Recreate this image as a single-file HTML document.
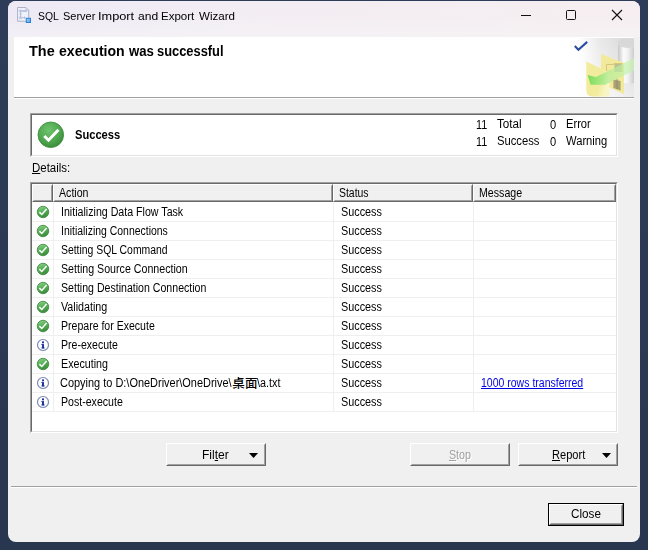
<!DOCTYPE html>
<html><head><meta charset="utf-8"><title>SQL Server Import and Export Wizard</title>
<style>
*{box-sizing:border-box;margin:0;padding:0}
html,body{width:648px;height:550px;overflow:hidden}
body{background:linear-gradient(180deg,#2d3c58 0%,#293650 100%);font-family:"Liberation Sans","Noto Sans CJK TC",sans-serif;font-size:12px;line-height:14px;color:#000;position:relative}
div,span.a,svg.a{position:absolute}
.t{display:block;white-space:nowrap;transform:scaleX(.885);transform-origin:0 0;position:absolute}
#win{left:8px;top:1px;width:632px;height:541px;background:#f0f0f0;border-radius:8px;overflow:hidden}
#tb{left:8px;top:1px;width:632px;height:36px;border-radius:8px 8px 0 0;background:linear-gradient(180deg,rgba(255,255,255,0) 0%,rgba(255,255,255,0) 40%,rgba(246,246,246,.55) 100%),linear-gradient(90deg,#ede9f5 0%,#f2edf4 30%,#f6eef0 100%)}
#title{left:38px;top:8px;font-size:11.67px;color:#1b1b1b;white-space:nowrap}
#hdr{left:14px;top:37px;width:620px;height:60px;background:#fff}
#hline{left:14px;top:97px;width:620px;height:1px;background:#a0a0a0}
#hline2{left:14px;top:98px;width:620px;height:1px;background:#fff}
#htext{left:29px;top:44px;font-weight:bold;font-size:13.56px;white-space:nowrap}
.sunk{border:1px solid;border-color:#a0a0a0 #fff #fff #a0a0a0;background:#fff}
.sunk:before{content:"";position:absolute;left:0;top:0;right:0;bottom:0;border:1px solid;border-color:#696969 #e3e3e3 #e3e3e3 #696969}
.btn{background:#f0f0f0;border:1px solid;border-color:#fff #696969 #696969 #fff}
.btn:before{content:"";position:absolute;left:0;top:0;right:0;bottom:0;border:1px solid;border-color:#f0f0f0 #a0a0a0 #a0a0a0 #f0f0f0}
.hc{top:184px;height:18px;background:#f0f0f0;border:1px solid;border-color:#fff #696969 #696969 #fff}
.hc:before{content:"";position:absolute;left:0;top:0;right:0;bottom:0;border:1px solid;border-color:#f0f0f0 #a0a0a0 #a0a0a0 #f0f0f0}
.gl{background:#efefef}
.cj{font-size:12.5px;letter-spacing:.4px;transform:none;font-weight:500}
a{color:#0000e6;text-decoration:underline}
u{text-decoration:underline}
</style></head><body>
<div id="win"></div><div id="tb"></div>
<svg class="a" style="left:16px;top:6px" width="17" height="18" viewBox="0 0 17 18"><defs><linearGradient id="bq" x1="0" y1="0" x2="1" y2="1"><stop offset="0" stop-color="#a4dcff"/><stop offset="1" stop-color="#4a9ce8"/></linearGradient></defs><path d="M1.6 1.5 H10 L12.7 4.2 V15.2 H1.6 Z" fill="#eff2fa" stroke="#adb1c6" stroke-width="1"/><path d="M10 1.5 V4.2 H12.7" fill="none" stroke="#c4c8d8" stroke-width=".8"/><g fill="none" stroke="#aab6d8" stroke-width=".9"><rect x="3.3" y="4.2" width="2.6" height="1.4" rx=".6"/><rect x="8.4" y="4.2" width="2.4" height="1.4" rx=".6"/><path d="M5.9 4.9 L8.4 4.9 M4.6 5.6 V11 M3.6 7.9 H5.6 M5.9 11.7 H9.2 M8.2 10.7 L9.3 11.7 L8.2 12.7 M6.4 4.4 L8 6"/><rect x="3.3" y="11" width="2.6" height="1.4" rx=".6"/></g><rect x="10.3" y="12.3" width="4.2" height="4.2" fill="url(#bq)" stroke="#2f80d4" stroke-width="1"/></svg>
<span class="t" style="left:38.03px;top:9px;transform:scaleX(0.8892);font-size:11.7px;color:#000;">SQL</span>
<span class="t" style="left:62.51px;top:9px;transform:scaleX(0.9391);font-size:11.7px;color:#000;">Server</span>
<span class="t" style="left:97.82px;top:9px;transform:scaleX(1.0916);font-size:11.7px;color:#000;">Import</span>
<span class="t" style="left:137.59px;top:9px;transform:scaleX(1.0338);font-size:11.7px;color:#000;">and</span>
<span class="t" style="left:160.75px;top:9px;transform:scaleX(0.986);font-size:11.7px;color:#000;">Export</span>
<span class="t" style="left:198.64px;top:9px;transform:scaleX(0.9888);font-size:11.7px;color:#000;">Wizard</span>
<svg class="a" style="left:510px;top:1px" width="130" height="30" viewBox="0 0 130 30"><path d="M11 14.5h10" stroke="#111" stroke-width="1"/><rect x="56.5" y="9.5" width="9" height="9" rx="1" fill="none" stroke="#111" stroke-width="1"/><path d="M102 9l10 10M112 9l-10 10" stroke="#111" stroke-width="1.1"/></svg>
<div id="hdr"></div><div id="hline"></div><div id="hline2"></div>
<span class="t" style="left:29.12px;top:43px;transform:scaleX(1.0307);font-weight:bold;font-size:14px;line-height:16px;">The</span>
<span class="t" style="left:58.74px;top:43px;transform:scaleX(1.0056);font-weight:bold;font-size:14px;line-height:16px;">execution</span>
<span class="t" style="left:128.93px;top:43px;transform:scaleX(0.9408);font-weight:bold;font-size:14px;line-height:16px;">was</span>
<span class="t" style="left:157.15px;top:43px;transform:scaleX(0.9195);font-weight:bold;font-size:14px;line-height:16px;">successful</span>
<svg class="a" style="left:570px;top:38px" width="64" height="59" viewBox="0 0 64 59">
<defs>
<linearGradient id="fade" x1="0" y1="0" x2="1" y2="0"><stop offset="0" stop-color="#fff"/><stop offset=".12" stop-color="#f8f8f8"/><stop offset=".38" stop-color="#e6e6e6"/><stop offset="1" stop-color="#d8d8d8"/></linearGradient>
<linearGradient id="fade2" x1="0" y1="1" x2=".7" y2="0"><stop offset="0" stop-color="#fff" stop-opacity="1"/><stop offset=".5" stop-color="#fff" stop-opacity=".45"/><stop offset="1" stop-color="#fff" stop-opacity="0"/></linearGradient>
<filter id="bl" x="-10%" y="-10%" width="120%" height="120%"><feGaussianBlur stdDeviation=".45"/></filter>
<linearGradient id="cyl" x1="0" y1="0" x2="1" y2="0"><stop offset="0" stop-color="#c6c6c6"/><stop offset=".35" stop-color="#fbfbfb"/><stop offset=".6" stop-color="#f2f2f2"/><stop offset="1" stop-color="#cdcdcd"/></linearGradient>
<linearGradient id="fold" x1="0" y1="0" x2="1" y2=".4"><stop offset="0" stop-color="#f3ec9c"/><stop offset=".7" stop-color="#f1eb9e"/><stop offset="1" stop-color="#f9f5c4"/></linearGradient>
<linearGradient id="arr" x1="0" y1="0" x2="1" y2="0"><stop offset="0" stop-color="#5fd94a"/><stop offset=".25" stop-color="#8be574" stop-opacity=".95"/><stop offset=".5" stop-color="#b4ee9c" stop-opacity=".8"/><stop offset="1" stop-color="#c9f5b2" stop-opacity=".85"/></linearGradient>
</defs>
<rect x="7" y="0" width="57" height="59" fill="url(#fade)"/><rect x="7" y="0" width="57" height="59" fill="url(#fade2)"/><g filter="url(#bl)">
<path d="M48 5 V43 Q56 47 64 45 V5 Z" fill="url(#cyl)"/>
<ellipse cx="58" cy="5" rx="10.5" ry="5" fill="#d8d8d8"/>
<path d="M31 16 L54 25 V56 L39 49.5 H31 Z" fill="#f1ea9a"/>
<path d="M36.5 26.5 H44 V25.5 H52 V34 M36.5 26.5 V36" fill="none" stroke="#d9c47c" stroke-width="1"/>
<rect x="44.5" y="26" width="7.2" height="8" fill="#a9b08a" opacity=".75"/>
<path d="M43.4 41.5 L50.6 43 V52.6 L43.4 50 Z" fill="#aaa274"/>
<rect x="46.6" y="40.8" width="1" height="10.4" fill="#8c8660" opacity=".8"/>
<path d="M16.3 23.6 L39.5 34.5 V58.6 H22 Q16.3 58 16.3 52 Z" fill="url(#fold)"/>
<path d="M17.6 37 L26 39 L66 19 V31.5 L35 46.8 L20.6 46.8 Z" fill="url(#arr)" opacity=".8"/></g>
<path d="M4.8 8 L8.4 11.7 L17.2 3.9" fill="none" stroke="#2b4ea2" stroke-width="2.1"/>
</svg>
<div class="sunk" style="left:30px;top:113px;width:588px;height:44px"></div>
<svg class="a" style="left:37px;top:121px" width="28" height="28" viewBox="0 0 28 28"><defs><radialGradient id="G" cx="42%" cy="32%" r="70%"><stop offset="0" stop-color="#6ec46e"/><stop offset=".7" stop-color="#4aa24a"/><stop offset="1" stop-color="#3a8c3a"/></radialGradient></defs><circle cx="13.8" cy="13.8" r="12.8" fill="url(#G)" stroke="#3a8a3a" stroke-width=".8"/><path d="M7.3 15 L11.5 19.2 L21.5 8.8" fill="none" stroke="#fff" stroke-width="3"/></svg>
<span class="t" style="left:75.37px;top:128px;transform:scaleX(0.9279);font-weight:bold;">Success</span>
<span class="t" style="left:475.99px;top:118px;transform:scaleX(0.9016);">11</span>
<span class="t" style="left:496.94px;top:117px;transform:scaleX(0.9724);">Total</span>
<span class="t" style="left:550.16px;top:118px;transform:scaleX(0.925);">0</span>
<span class="t" style="left:566.18px;top:117px;transform:scaleX(0.9294);">Error</span>
<span class="t" style="left:475.99px;top:135px;transform:scaleX(0.9016);">11</span>
<span class="t" style="left:496.59px;top:134px;transform:scaleX(0.9369);">Success</span>
<span class="t" style="left:550.16px;top:135px;transform:scaleX(0.925);">0</span>
<span class="t" style="left:565.94px;top:134px;transform:scaleX(0.933);">Warning</span>
<span class="t" style="left:32.06px;top:161px;transform:scaleX(0.9539);"><u>D</u>etails:</span>
<div class="sunk" style="left:30px;top:182px;width:588px;height:251px"></div>
<div class="hc" style="left:32px;width:21px"></div>
<div class="hc" style="left:53px;width:280px"></div>
<span class="t" style="left:59.22px;top:186px;transform:scaleX(0.8841);">Action</span>
<div class="hc" style="left:333px;width:140px"></div>
<span class="t" style="left:339.03px;top:186px;transform:scaleX(0.8696);">Status</span>
<div class="hc" style="left:473px;width:143px"></div>
<span class="t" style="left:478.62px;top:186px;transform:scaleX(0.8858);">Message</span>
<div class="gl" style="left:32px;top:221px;width:584px;height:1px"></div>
<div class="gl" style="left:32px;top:240px;width:584px;height:1px"></div>
<div class="gl" style="left:32px;top:259px;width:584px;height:1px"></div>
<div class="gl" style="left:32px;top:278px;width:584px;height:1px"></div>
<div class="gl" style="left:32px;top:297px;width:584px;height:1px"></div>
<div class="gl" style="left:32px;top:316px;width:584px;height:1px"></div>
<div class="gl" style="left:32px;top:335px;width:584px;height:1px"></div>
<div class="gl" style="left:32px;top:354px;width:584px;height:1px"></div>
<div class="gl" style="left:32px;top:373px;width:584px;height:1px"></div>
<div class="gl" style="left:32px;top:392px;width:584px;height:1px"></div>
<div class="gl" style="left:32px;top:411px;width:584px;height:1px"></div>
<div class="gl" style="left:53px;top:202px;width:1px;height:209px"></div>
<div class="gl" style="left:333px;top:202px;width:1px;height:209px"></div>
<div class="gl" style="left:473px;top:202px;width:1px;height:209px"></div>
<svg class="a" style="left:36px;top:205px" width="14" height="14" viewBox="0 0 14 14"><defs><linearGradient id="g0" x1=".3" y1="0" x2=".6" y2="1"><stop offset="0" stop-color="#86cf86"/><stop offset=".5" stop-color="#52ad52"/><stop offset="1" stop-color="#3a8a3a"/></linearGradient></defs><circle cx="7" cy="7" r="5.75" fill="url(#g0)" stroke="#3b873b" stroke-width=".8"/><path d="M3.4 7.1 L5.8 9.5 L10.6 3.9" fill="none" stroke="#fff" stroke-width="1.5"/></svg>
<span class="t" style="left:60.82px;top:205px;transform:scaleX(0.8864);">Initializing Data Flow Task</span>
<span class="t" style="left:340.76px;top:205px;transform:scaleX(0.9009);">Success</span>
<svg class="a" style="left:36px;top:224px" width="14" height="14" viewBox="0 0 14 14"><defs><linearGradient id="g1" x1=".3" y1="0" x2=".6" y2="1"><stop offset="0" stop-color="#86cf86"/><stop offset=".5" stop-color="#52ad52"/><stop offset="1" stop-color="#3a8a3a"/></linearGradient></defs><circle cx="7" cy="7" r="5.75" fill="url(#g1)" stroke="#3b873b" stroke-width=".8"/><path d="M3.4 7.1 L5.8 9.5 L10.6 3.9" fill="none" stroke="#fff" stroke-width="1.5"/></svg>
<span class="t" style="left:60.83px;top:224px;transform:scaleX(0.87);">Initializing Connections</span>
<span class="t" style="left:340.76px;top:224px;transform:scaleX(0.9009);">Success</span>
<svg class="a" style="left:36px;top:243px" width="14" height="14" viewBox="0 0 14 14"><defs><linearGradient id="g2" x1=".3" y1="0" x2=".6" y2="1"><stop offset="0" stop-color="#86cf86"/><stop offset=".5" stop-color="#52ad52"/><stop offset="1" stop-color="#3a8a3a"/></linearGradient></defs><circle cx="7" cy="7" r="5.75" fill="url(#g2)" stroke="#3b873b" stroke-width=".8"/><path d="M3.4 7.1 L5.8 9.5 L10.6 3.9" fill="none" stroke="#fff" stroke-width="1.5"/></svg>
<span class="t" style="left:61.33px;top:243px;transform:scaleX(0.8668);">Setting SQL Command</span>
<span class="t" style="left:340.76px;top:243px;transform:scaleX(0.9009);">Success</span>
<svg class="a" style="left:36px;top:262px" width="14" height="14" viewBox="0 0 14 14"><defs><linearGradient id="g3" x1=".3" y1="0" x2=".6" y2="1"><stop offset="0" stop-color="#86cf86"/><stop offset=".5" stop-color="#52ad52"/><stop offset="1" stop-color="#3a8a3a"/></linearGradient></defs><circle cx="7" cy="7" r="5.75" fill="url(#g3)" stroke="#3b873b" stroke-width=".8"/><path d="M3.4 7.1 L5.8 9.5 L10.6 3.9" fill="none" stroke="#fff" stroke-width="1.5"/></svg>
<span class="t" style="left:61.32px;top:262px;transform:scaleX(0.8871);">Setting Source Connection</span>
<span class="t" style="left:340.76px;top:262px;transform:scaleX(0.9009);">Success</span>
<svg class="a" style="left:36px;top:281px" width="14" height="14" viewBox="0 0 14 14"><defs><linearGradient id="g4" x1=".3" y1="0" x2=".6" y2="1"><stop offset="0" stop-color="#86cf86"/><stop offset=".5" stop-color="#52ad52"/><stop offset="1" stop-color="#3a8a3a"/></linearGradient></defs><circle cx="7" cy="7" r="5.75" fill="url(#g4)" stroke="#3b873b" stroke-width=".8"/><path d="M3.4 7.1 L5.8 9.5 L10.6 3.9" fill="none" stroke="#fff" stroke-width="1.5"/></svg>
<span class="t" style="left:61.32px;top:281px;transform:scaleX(0.8823);">Setting Destination Connection</span>
<span class="t" style="left:340.76px;top:281px;transform:scaleX(0.9009);">Success</span>
<svg class="a" style="left:36px;top:300px" width="14" height="14" viewBox="0 0 14 14"><defs><linearGradient id="g5" x1=".3" y1="0" x2=".6" y2="1"><stop offset="0" stop-color="#86cf86"/><stop offset=".5" stop-color="#52ad52"/><stop offset="1" stop-color="#3a8a3a"/></linearGradient></defs><circle cx="7" cy="7" r="5.75" fill="url(#g5)" stroke="#3b873b" stroke-width=".8"/><path d="M3.4 7.1 L5.8 9.5 L10.6 3.9" fill="none" stroke="#fff" stroke-width="1.5"/></svg>
<span class="t" style="left:61.15px;top:300px;transform:scaleX(0.8931);">Validating</span>
<span class="t" style="left:340.76px;top:300px;transform:scaleX(0.9009);">Success</span>
<svg class="a" style="left:36px;top:319px" width="14" height="14" viewBox="0 0 14 14"><defs><linearGradient id="g6" x1=".3" y1="0" x2=".6" y2="1"><stop offset="0" stop-color="#86cf86"/><stop offset=".5" stop-color="#52ad52"/><stop offset="1" stop-color="#3a8a3a"/></linearGradient></defs><circle cx="7" cy="7" r="5.75" fill="url(#g6)" stroke="#3b873b" stroke-width=".8"/><path d="M3.4 7.1 L5.8 9.5 L10.6 3.9" fill="none" stroke="#fff" stroke-width="1.5"/></svg>
<span class="t" style="left:60.93px;top:319px;transform:scaleX(0.8787);">Prepare for Execute</span>
<span class="t" style="left:340.76px;top:319px;transform:scaleX(0.9009);">Success</span>
<svg class="a" style="left:36px;top:338px" width="14" height="14" viewBox="0 0 14 14"><circle cx="7.2" cy="7.2" r="5.5" fill="none" stroke="#c8cede" stroke-width="1"/><circle cx="7" cy="7" r="5.5" fill="#fff" stroke="#7f8cb4" stroke-width="1.2"/><rect x="6" y="3.4" width="2" height="1.9" fill="#1d35a0"/><rect x="6" y="6.1" width="2" height="4.3" fill="#1d35a0"/><rect x="5.3" y="6.1" width="1" height=".9" fill="#1d35a0"/><rect x="5.3" y="9.5" width="3.4" height=".9" fill="#1d35a0"/></svg>
<span class="t" style="left:60.93px;top:338px;transform:scaleX(0.8777);">Pre-execute</span>
<span class="t" style="left:340.76px;top:338px;transform:scaleX(0.9009);">Success</span>
<svg class="a" style="left:36px;top:357px" width="14" height="14" viewBox="0 0 14 14"><defs><linearGradient id="g8" x1=".3" y1="0" x2=".6" y2="1"><stop offset="0" stop-color="#86cf86"/><stop offset=".5" stop-color="#52ad52"/><stop offset="1" stop-color="#3a8a3a"/></linearGradient></defs><circle cx="7" cy="7" r="5.75" fill="url(#g8)" stroke="#3b873b" stroke-width=".8"/><path d="M3.4 7.1 L5.8 9.5 L10.6 3.9" fill="none" stroke="#fff" stroke-width="1.5"/></svg>
<span class="t" style="left:60.92px;top:357px;transform:scaleX(0.8922);">Executing</span>
<span class="t" style="left:340.76px;top:357px;transform:scaleX(0.9009);">Success</span>
<svg class="a" style="left:36px;top:376px" width="14" height="14" viewBox="0 0 14 14"><circle cx="7.2" cy="7.2" r="5.5" fill="none" stroke="#c8cede" stroke-width="1"/><circle cx="7" cy="7" r="5.5" fill="#fff" stroke="#7f8cb4" stroke-width="1.2"/><rect x="6" y="3.4" width="2" height="1.9" fill="#1d35a0"/><rect x="6" y="6.1" width="2" height="4.3" fill="#1d35a0"/><rect x="5.3" y="6.1" width="1" height=".9" fill="#1d35a0"/><rect x="5.3" y="9.5" width="3.4" height=".9" fill="#1d35a0"/></svg>
<span class="t" style="left:60.35px;top:376px;transform:scaleX(0.9127);">Copying to D:\OneDriver\OneDrive\</span>
<span class="t cj" style="left:232.2px;top:377px">桌面</span>
<span class="t" style="left:257.2px;top:376px;transform:scaleX(0.9028);">\a.txt</span>
<span class="t" style="left:340.76px;top:376px;transform:scaleX(0.9009);">Success</span>
<span class="t" style="left:481.01px;top:376px;transform:scaleX(0.8753);"><a>1000 rows transferred</a></span>
<svg class="a" style="left:36px;top:395px" width="14" height="14" viewBox="0 0 14 14"><circle cx="7.2" cy="7.2" r="5.5" fill="none" stroke="#c8cede" stroke-width="1"/><circle cx="7" cy="7" r="5.5" fill="#fff" stroke="#7f8cb4" stroke-width="1.2"/><rect x="6" y="3.4" width="2" height="1.9" fill="#1d35a0"/><rect x="6" y="6.1" width="2" height="4.3" fill="#1d35a0"/><rect x="5.3" y="6.1" width="1" height=".9" fill="#1d35a0"/><rect x="5.3" y="9.5" width="3.4" height=".9" fill="#1d35a0"/></svg>
<span class="t" style="left:60.93px;top:395px;transform:scaleX(0.8822);">Post-execute</span>
<span class="t" style="left:340.76px;top:395px;transform:scaleX(0.9009);">Success</span>
<div class="btn" style="left:166px;top:443px;width:100px;height:23px"></div>
<span class="t" style="left:202.21px;top:448px;transform:scaleX(1.0039);">Fil<u>t</u>er</span>
<svg class="a" style="left:249.2px;top:453.3px" width="10" height="6"><path d="M0 0h9L4.5 5z" fill="#000"/></svg>
<div class="btn" style="left:410px;top:443px;width:100px;height:23px"></div>
<span class="t" style="left:450.02px;top:449px;transform:scaleX(0.8883);color:#fff;"><u>S</u>top</span>
<span class="t" style="left:449.02px;top:448px;transform:scaleX(0.8883);color:#a0a0a0;"><u>S</u>top</span>
<div class="btn" style="left:518px;top:443px;width:100px;height:23px"></div>
<span class="t" style="left:551.89px;top:448px;transform:scaleX(0.9221);"><u>R</u>eport</span>
<svg class="a" style="left:601.8px;top:453.3px" width="10" height="6"><path d="M0 0h9L4.5 5z" fill="#000"/></svg>
<div style="left:11px;top:486px;width:626px;height:1px;background:#a0a0a0"></div><div style="left:11px;top:487px;width:626px;height:1px;background:#fff"></div>
<div style="left:548px;top:503px;width:76px;height:23px;background:#000"></div>
<div class="btn" style="left:549px;top:504px;width:74px;height:21px"></div>
<span class="t" style="left:570.82px;top:507px;transform:scaleX(0.9746);">Close</span>
</body></html>
